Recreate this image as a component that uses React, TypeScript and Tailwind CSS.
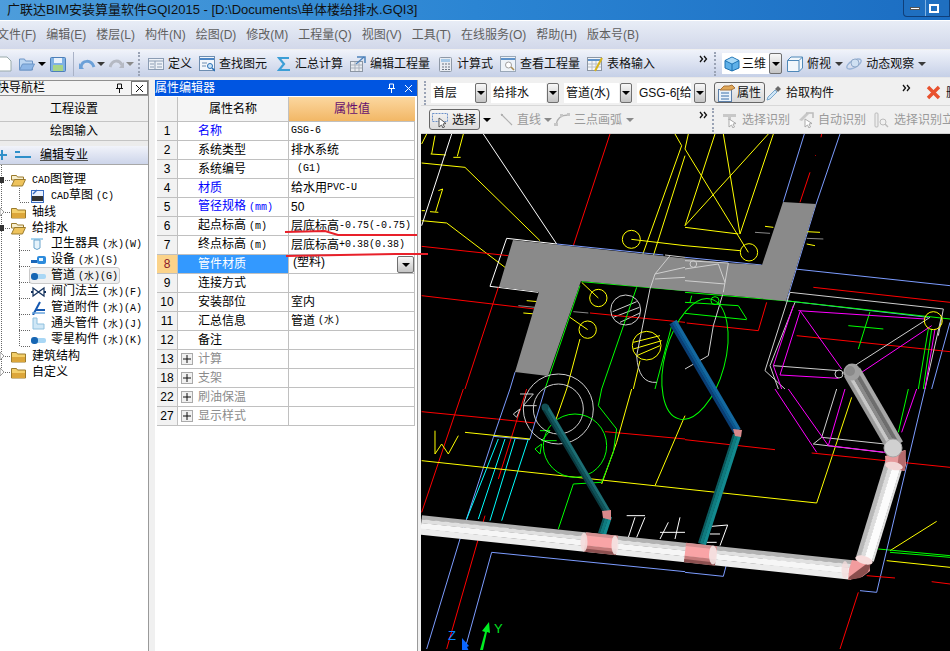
import React from "react";

const Arrow = ({ c = "border-t-black" }: { c?: string }) => (
  <div className={`w-0 h-0 border-x-[4px] border-t-[4px] border-x-transparent ${c}`} />
);
const GreyArrow = () => <Arrow c="border-t-[#8a8a8a]" />;
const DarkArrow = () => <Arrow c="border-t-[#3a3a3a]" />;

const DropBtn = ({ c = "w-[12px] h-[20px]" }: { c?: string }) => (
  <div className={`${c} flex items-center justify-center border border-[#6f6f6f] rounded-[2px] bg-gradient-to-b from-[#f8f8f8] to-[#c4c4c4] shrink-0`}>
    <Arrow />
  </div>
);

const M = ({ children }: { children: React.ReactNode }) => (
  <span className="font-['Liberation_Mono',monospace] text-[10px]">{children}</span>
);
const MS = ({ children }: { children: React.ReactNode }) => (
  <span className="ml-[3px] font-['Liberation_Mono',monospace] text-[10px]">{children}</span>
);

const Chevrons = () => (
  <svg width="9" height="8" viewBox="0 0 9 8" className="shrink-0">
    <path d="M1 1l2.5 3L1 7M5 1l2.5 3L5 7" fill="none" stroke="#111" strokeWidth="1.3" />
  </svg>
);

const Dots = () => (
  <div className="w-[3px] h-[24px] shrink-0 border-l-2 border-dotted border-[#9aa3b5]" />
);

const I = ({ children, w = 16, h = 16 }: { children: React.ReactNode; w?: number; h?: number }) => (
  <svg width={w} height={h} viewBox={`0 0 ${w} ${h}`} className="shrink-0">
    {children}
  </svg>
);

const FolderClosed = () => (
  <I w={15} h={14}>
    <path d="M0.5 3.5h5l1 1.5h8v8h-14z" fill="#f3cf6a" stroke="#9a7a2c" />
    <rect x="1" y="8" width="13" height="5" fill="#dca63a" />
  </I>
);
const FolderOpen = () => (
  <I w={15} h={14}>
    <path d="M0.5 2.5h5l1 1.5h6v3h-12z" fill="#f7efd0" stroke="#9a7a2c" />
    <path d="M0.5 13l3-6.5h11l-3 6.5z" fill="#eec35c" stroke="#9a7a2c" />
  </I>
);

const TreeIcon = ({ kind }: { kind: string }) => {
  if (kind === "cad")
    return (
      <I w={14} h={14}>
        <rect x="0.5" y="1.5" width="12" height="12" fill="#e8f0ff" stroke="#3a6cc0" />
        <path d="M2 5L6 1" stroke="#3a6cc0" strokeWidth="1.5" />
        <rect x="1" y="7" width="11" height="5" fill="#333" />
      </I>
    );
  if (kind === "basin")
    return (
      <I w={14} h={14}>
        <path d="M0 1h12v2H0z" fill="#a8d4ee" />
        <path d="M3 3h6v8q-3 3-6 0z" fill="#e6f3fb" stroke="#6aa4cc" />
      </I>
    );
  if (kind === "device")
    return (
      <I w={16} h={14}>
        <rect x="0" y="7" width="6" height="3" fill="#1a66b8" />
        <rect x="6" y="3" width="9" height="8" rx="2" fill="#2d8bdc" />
        <rect x="8" y="5" width="4" height="3" fill="#e6f5ff" />
      </I>
    );
  if (kind === "pipe")
    return (
      <I w={15} h={14}>
        <rect x="3" y="5" width="12" height="5" rx="2" fill="#a9d7f5" />
        <rect x="0" y="4" width="7" height="7" rx="3" fill="#1766b3" />
      </I>
    );
  if (kind === "valve")
    return (
      <I w={15} h={14}>
        <path d="M2 3l11 8V3L2 11z" fill="#fff" stroke="#12305c" strokeWidth="1.2" />
        <path d="M0 7h2M13 7h2" stroke="#12305c" strokeWidth="2" />
      </I>
    );
  if (kind === "acc")
    return (
      <I w={15} h={14}>
        <path d="M2 14L9 1" stroke="#1558b0" strokeWidth="2" />
        <path d="M4 9h10" stroke="#1558b0" strokeWidth="2" />
        <path d="M1 12h13" stroke="#6aa4dc" strokeWidth="1.5" />
      </I>
    );
  return (
    <I w={14} h={14}>
      <path d="M2 1h4v6h7v5H2z" fill="#cfe7f6" stroke="#8fc0de" />
    </I>
  );
};

const TreeRow = ({ ml, icon, children, sel }: { ml: string; icon: React.ReactNode; children: React.ReactNode; sel?: boolean }) => (
  <div className={`h-[16px] flex items-center relative ${ml}`}>
    {sel && <div className="absolute left-[-2px] top-[-1px] w-[91px] h-[17px] rounded-[3px] border border-[#c9c9c9] bg-[#f1f1f1]" />}
    <div className="relative w-[19px] shrink-0 flex items-center">{icon}</div>
    <div className="relative whitespace-nowrap text-[12px] leading-[16px] text-black">{children}</div>
  </div>
);

const Tree = () => (
  <div className="relative pt-[7px] flex flex-col">
    <svg className="absolute left-0 top-0" width="40" height="212" viewBox="0 0 40 212">
      <g stroke="#666" strokeDasharray="1 1" fill="none" shapeRendering="crispEdges">
        <path d="M19.5 23V37H30M19.5 70V181H30M1.5 0V210M5 15h6M5 47h6M5 63h6M5 191h6M5 207h6" />
        <path d="M19 85h12M19 101h12M19 117h12M19 133h12M19 149h12M19 165h12" />
      </g>
      <path d="M0 12l4 0 0 6-4 0z" fill="#333" />
      <path d="M0 60l4 0 0 6-4 0z" fill="#333" />
      <path d="M0 43l4 4-4 4z M0 187l4 4-4 4z M0 203l4 4-4 4z" fill="#fff" stroke="#999" />
    </svg>
    <TreeRow ml="ml-[11px]" icon={<FolderOpen />}>
      <span className="ml-[2px]"><M>CAD</M>图管理</span>
    </TreeRow>
    <TreeRow ml="ml-[31px]" icon={<TreeIcon kind="cad" />}>
      <span className="ml-[1px]"><M>CAD</M>草图<MS>(C)</MS></span>
    </TreeRow>
    <TreeRow ml="ml-[11px]" icon={<FolderClosed />}><span className="ml-[2px]">轴线</span></TreeRow>
    <TreeRow ml="ml-[11px]" icon={<FolderOpen />}><span className="ml-[2px]">给排水</span></TreeRow>
    <TreeRow ml="ml-[31px]" icon={<TreeIcon kind="basin" />}><span className="ml-[1px]">卫生器具<MS>(水)(W)</MS></span></TreeRow>
    <TreeRow ml="ml-[31px]" icon={<TreeIcon kind="device" />}><span className="ml-[1px]">设备<MS>(水)(S)</MS></span></TreeRow>
    <TreeRow ml="ml-[31px]" sel icon={<TreeIcon kind="pipe" />}><span className="ml-[1px]">管道<MS>(水)(G)</MS></span></TreeRow>
    <TreeRow ml="ml-[31px]" icon={<TreeIcon kind="valve" />}><span className="ml-[1px]">阀门法兰<MS>(水)(F)</MS></span></TreeRow>
    <TreeRow ml="ml-[31px]" icon={<TreeIcon kind="acc" />}><span className="ml-[1px]">管道附件<MS>(水)(A)</MS></span></TreeRow>
    <TreeRow ml="ml-[31px]" icon={<TreeIcon kind="elbow" />}><span className="ml-[1px]">通头管件<MS>(水)(J)</MS></span></TreeRow>
    <TreeRow ml="ml-[31px]" icon={<TreeIcon kind="pipe" />}><span className="ml-[1px]">零星构件<MS>(水)(K)</MS></span></TreeRow>
    <TreeRow ml="ml-[11px]" icon={<FolderClosed />}><span className="ml-[2px]">建筑结构</span></TreeRow>
    <TreeRow ml="ml-[11px]" icon={<FolderClosed />}><span className="ml-[2px]">自定义</span></TreeRow>
  </div>
);

const Pin = ({ c = "#111" }: { c?: string }) => (
  <svg width="9" height="10" viewBox="0 0 9 10">
    <path d="M2.5 1h4v4.5h-4zM1 5.5h7M4.5 5.5V10" fill="none" stroke={c} strokeWidth="1" />
  </svg>
);
const XMark = ({ c = "#111" }: { c?: string }) => (
  <svg width="9" height="9" viewBox="0 0 9 9">
    <path d="M1 1l7 7M8 1L1 8" stroke={c} strokeWidth="1" />
  </svg>
);

const LeftPanel = () => (
  <div className="w-[149px] shrink-0 flex flex-col border-r border-[#9a9a9a]">
    <div className="h-[16px] flex items-center bg-[#f4f4f4] border-y border-[#8f8f8f] text-[12px] leading-[14px] overflow-hidden">
      <span className="ml-[-3px] flex-1 whitespace-nowrap">快导航栏</span>
      <div className="mr-[7px]"><Pin /></div>
      <div className="w-[17px] h-[14px] border border-[#777] bg-white flex items-center justify-center"><XMark /></div>
    </div>
    <div className="h-[26px] bg-[#f0f0f0] border-b border-[#c4c4c4] flex items-center justify-center text-[12px]">工程设置</div>
    <div className="h-[19px] bg-[#f0f0f0] border-b border-[#c4c4c4] flex items-center justify-center text-[12px]">绘图输入</div>
    <div className="h-[5px] bg-[#ececec]" />
    <div className="h-[19px] flex items-center bg-gradient-to-b from-[#f1f3fa] to-[#cdd5ea] border-b border-[#a8a8a8]">
      <svg width="34" height="12" viewBox="0 0 34 12" className="shrink-0">
        <path d="M-3 6h10M2 1v10" stroke="#2f8fc9" strokeWidth="2" />
        <path d="M15 3h5M15 8h16" stroke="#2f8fc9" strokeWidth="2" />
      </svg>
      <span className="ml-[6px] text-[12px] underline decoration-[#555]">编辑专业</span>
    </div>
    <div className="flex-1 bg-white"><Tree /></div>
  </div>
);

type Row = { n: string; name: React.ReactNode; val?: React.ReactNode; kind?: "blue" | "grey" | "sel" };

const rows: Row[] = [
  { n: "1", name: "名称", val: <M>GSG-6</M>, kind: "blue" },
  { n: "2", name: "系统类型", val: "排水系统" },
  { n: "3", name: "系统编号", val: <M>&nbsp;(G1)</M> },
  { n: "4", name: "材质", val: <>给水用<M>PVC-U</M></>, kind: "blue" },
  { n: "5", name: <>管径规格<MS>(mm)</MS></>, val: "50", kind: "blue" },
  { n: "6", name: <>起点标高<MS>(m)</MS></>, val: <>层底标高<M>-0.75(-0.75)</M></> },
  { n: "7", name: <>终点标高<MS>(m)</MS></>, val: <>层底标高<M>+0.38(0.38)</M></> },
  { n: "8", name: "管件材质", val: "(塑料)", kind: "sel" },
  { n: "9", name: "连接方式" },
  { n: "10", name: "安装部位", val: "室内" },
  { n: "11", name: "汇总信息", val: <>管道<MS>(水)</MS></> },
  { n: "12", name: "备注" },
  { n: "13", name: "计算", kind: "grey" },
  { n: "18", name: "支架", kind: "grey" },
  { n: "22", name: "刷油保温", kind: "grey" },
  { n: "27", name: "显示样式", kind: "grey" },
];

const PropRow = ({ r }: { r: Row }) => {
  const sel = r.kind === "sel";
  const grey = r.kind === "grey";
  const blue = r.kind === "blue";
  return (
    <div className="h-[19px] flex border-b border-[#c0c0c0] text-[12px] leading-[18px]">
      <div className={`w-[21px] shrink-0 flex items-center justify-center border-r border-[#c0c0c0] ${sel ? "bg-[#fbd38a] text-[#8a1a2a]" : "bg-[#f2f2f2] text-black"}`}>{r.n}</div>
      <div className={`w-[111px] shrink-0 border-r border-[#c0c0c0] flex items-center ${sel ? "bg-[#3399ff] text-white" : blue ? "text-[#0000ff]" : grey ? "text-[#8c8c8c]" : "text-black"}`}>
        {grey ? (
          <div className="ml-[3px] mr-[5px] w-[12px] h-[12px] border border-[#aaa] bg-[#f1f1f1] flex items-center justify-center">
            <svg width="8" height="8" viewBox="0 0 8 8"><path d="M0 4h8M4 0v8" stroke="#111" strokeWidth="1" /></svg>
          </div>
        ) : (
          <div className="w-[20px] shrink-0" />
        )}
        <span className="whitespace-nowrap">{r.name}</span>
      </div>
      <div className="flex-1 min-w-0 flex items-center relative pl-[2px] whitespace-nowrap text-black overflow-hidden">
        {sel ? <span className="ml-[2px] -mt-[4px]">{r.val}</span> : r.val}
        {sel && <div className="absolute right-0 top-[1px]"><DropBtn c="w-[17px] h-[17px]" /></div>}
      </div>
    </div>
  );
};

const PropPanel = () => (
  <div className="w-[263px] shrink-0 flex flex-col bg-white border-r border-[#9a9a9a]">
    <div className="h-[16px] bg-[#0055e1] text-white flex items-center text-[12px] leading-[14px]">
      <span className="flex-1">属性编辑器</span>
      <div className="mr-[8px]"><Pin c="#fff" /></div>
      <div className="mr-[4px]"><XMark c="#fff" /></div>
    </div>
    <div className="mt-[1px] ml-[2px] w-[258px] flex flex-col">
      <div className="h-[25px] flex border-b border-[#c0c0c0] text-[12px]">
        <div className="w-[21px] bg-[#f2f2f2] border-r border-[#c0c0c0]" />
        <div className="w-[111px] bg-[#f5f5f5] border-r border-[#c0c0c0] flex items-center justify-center">属性名称</div>
        <div className="flex-1 bg-gradient-to-b from-[#fbd79f] to-[#f2b765] text-[#66106f] flex items-center justify-center">属性值</div>
      </div>
      <div className="border-r border-[#c0c0c0]">
        {rows.map((r) => (
          <PropRow key={r.n} r={r} />
        ))}
      </div>
    </div>
  </div>
);

/* ---------------- toolbar ---------------- */
const Doc = () => (
  <I><path d="M-2 1h9l4 4v10H-2z" fill="#fff" stroke="#9aa" /></I>
);
const Folder2 = () => (
  <I>
    <path d="M0.5 3h5l1 2h7v9h-13z" fill="#bcd6f2" stroke="#6d95c6" />
    <path d="M0.5 14l3-6h12l-3 6z" fill="#8db6e6" stroke="#6d95c6" />
  </I>
);
const Save = () => (
  <I>
    <rect x="0.5" y="1.5" width="15" height="14" rx="1" fill="#7fb1e4" stroke="#4d7fb8" />
    <rect x="4" y="2" width="8" height="5" fill="#e8f1fb" />
    <rect x="3" y="9" width="10" height="6" fill="#a7d488" />
  </I>
);
const Undo = ({ c = "#6ba0d8" }: { c?: string }) => (
  <I w={17} h={16}>
    <path d="M2 11C3 4 12 3 15 11" fill="none" stroke={c} strokeWidth="3" />
    <path d="M0 7l5 6H0z" fill={c} />
  </I>
);
const Redo = () => (
  <I w={15} h={16}>
    <path d="M1 11C3 4 10 3 13 9" fill="none" stroke="#b5b9c3" strokeWidth="3" />
    <path d="M15 6v6H10z" fill="#b5b9c3" />
  </I>
);
const DefIcon = () => (
  <I>
    <rect x="0.5" y="2.5" width="15" height="11" fill="#eef2f8" stroke="#8b9cb3" />
    <path d="M1 5h14M7 5v8M9 8h5M9 11h5M2 8h4M2 11h4" stroke="#8b9cb3" />
  </I>
);
const FindIcon = () => (
  <I>
    <rect x="0.5" y="0.5" width="15" height="14" fill="#f2f6fb" stroke="#6d8db0" />
    <path d="M1 3h14" stroke="#4d86c4" strokeWidth="2" />
    <path d="M3 7h5M3 10h4" stroke="#6d8db0" />
    <circle cx="11" cy="10" r="2.5" fill="#cde6f8" stroke="#2a6fb5" />
    <path d="M13 12l3 3" stroke="#2a6fb5" strokeWidth="1.6" />
  </I>
);
const SigmaIcon = () => (
  <I w={14} h={16}>
    <path d="M12 2H2l5 6-5 6h11" fill="none" stroke="#3b9ed6" strokeWidth="2.2" />
  </I>
);
const EditQty = () => (
  <I>
    <rect x="0.5" y="5.5" width="12" height="10" fill="#e8ebf0" stroke="#8c96a3" />
    <path d="M1 9h11M1 12h11M5 6v9M9 6v9" stroke="#a9b1bc" />
    <path d="M7 1h8v6" fill="none" stroke="#4e82ba" strokeWidth="1.5" />
    <path d="M6 8l8-7" stroke="#4e82ba" strokeWidth="1.2" />
  </I>
);
const Calc = () => (
  <I w={14} h={16}>
    <rect x="0.5" y="1.5" width="12" height="14" rx="1" fill="#e8ecf2" stroke="#8e98a6" />
    <rect x="2" y="3" width="9" height="3" fill="#a5c9e8" />
    <path d="M3 8h2M6 8h2M9 8h2M3 11h2M6 11h2M9 11h2M3 13.5h2M6 13.5h2M9 13.5h2" stroke="#6a7482" />
  </I>
);
const ViewQty = () => (
  <I>
    <rect x="0.5" y="0.5" width="15" height="15" fill="#eef3f8" stroke="#9aa8b8" />
    <path d="M1 3h14" stroke="#5f92c9" strokeWidth="2" />
    <circle cx="8.5" cy="9" r="3" fill="#fff" stroke="#9f9f9f" />
    <path d="M11 11l3 3" stroke="#a88b50" strokeWidth="1.6" />
  </I>
);
const TableInput = () => (
  <I>
    <rect x="0.5" y="1.5" width="14" height="13" fill="#f4f6f9" stroke="#8c96a3" />
    <path d="M1 4h13" stroke="#5f92c9" strokeWidth="2" />
    <path d="M1 8h13M1 11h13M5 5v9M9 5v9" stroke="#b8bec8" />
    <path d="M8 15L15 2" stroke="#d8b41c" strokeWidth="2" />
  </I>
);
const Cube = () => (
  <I>
    <path d="M8 1l7 3.5v7.5L8 15l-7-3V4.5z" fill="#5eb0e8" stroke="#1a6fb0" />
    <path d="M1 4.5L8 8l7-3.5M8 8v7" fill="none" stroke="#1a6fb0" />
    <path d="M8 1.5l6 3-6 3-6-3z" fill="#a8d8f6" />
  </I>
);
const TopBox = () => (
  <I>
    <path d="M0.5 4.5L4 1h11.5v11L12 15.5H0.5z" fill="#f2f7fb" stroke="#4f88b8" />
    <path d="M0.5 4.5H12v11M12 4.5L15.5 1" fill="none" stroke="#4f88b8" />
  </I>
);
const Orbit = () => (
  <I>
    <ellipse cx="8" cy="8" rx="8" ry="3.5" transform="rotate(-30 8 8)" fill="none" stroke="#9ab4d6" strokeWidth="1.4" />
    <circle cx="9" cy="7" r="4" fill="#cfe0f2" stroke="#8fa8c8" />
  </I>
);
const PropIcon = () => (
  <I w={18} h={18}>
    <rect x="1.5" y="5.5" width="13" height="12" fill="#eaf3fb" stroke="#5c7fa8" />
    <path d="M4 9h8M4 12h8M4 15h8" stroke="#3a6ea8" />
    <path d="M3 6l4-4h5l3-1 3 3-4 2H4z" fill="#e0a85a" stroke="#a8743a" />
  </I>
);
const Dropper = () => (
  <I w={16} h={16}>
    <path d="M1 15l3-1 7-7-2-2-7 7z" fill="#cfe6f7" stroke="#7ba8cc" />
    <path d="M9 4l3 3 3-3-3-3z" fill="#6a6a6a" />
  </I>
);
const RedX = () => (
  <I w={15} h={15}>
    <path d="M2 2l11 11M13 2L2 13" stroke="#e8512e" strokeWidth="3.4" />
  </I>
);
const LineIcon = () => (
  <I w={13} h={13}>
    <path d="M1 1l11 11" stroke="#b0b0b0" strokeWidth="1.2" />
    <path d="M1 1h2v2H1z" fill="#b0b0b0" />
  </I>
);
const ArcIcon = () => (
  <I w={16} h={14}>
    <path d="M2 12C3 5 7 2 14 2" fill="none" stroke="#b0b0b0" strokeWidth="1.4" />
    <path d="M0 10h4v3H0zM6 1h3v3H6zM13 0h3v3h-3z" fill="#c6c6c6" />
  </I>
);
const SelectCursor = ({ grey }: { grey?: boolean }) => (
  <I w={16} h={16}>
    <rect x="0.5" y="1.5" width="15" height="8" fill="none" stroke={grey ? "#bbb" : "#6b90c8"} strokeDasharray="2 1" />
    <path d="M7 6l0 9 2.5-2 1.5 3 1.5-1-1.5-3 3-.5z" fill="#fff" stroke={grey ? "#aaa" : "#555"} />
  </I>
);
const GreyTool = () => (
  <I w={16} h={16}>
    <path d="M1 2h13v3H9v3H6V5H1z" fill="#c8c8c8" />
    <path d="M7 7l0 8 2.5-2 1.5 3 1.5-1-1.5-3 3-.5z" fill="#fff" stroke="#aaa" />
  </I>
);
const AutoTool = () => (
  <I w={16} h={16}>
    <path d="M1 8l7-7 3 1-7 7z" fill="#c8c8c8" />
    <path d="M8 1h7v5" fill="none" stroke="#bbb" strokeWidth="1.5" />
    <path d="M7 7l0 8 2.5-2 1.5 3 1.5-1-1.5-3 3-.5z" fill="#fff" stroke="#aaa" />
  </I>
);
const VertTool = () => (
  <I w={16} h={16}>
    <rect x="1" y="1" width="3" height="14" rx="1" fill="#ececec" stroke="#bbb" />
    <circle cx="9" cy="10" r="3" fill="none" stroke="#bbb" />
    <path d="M11 12l3 3" stroke="#bbb" strokeWidth="1.4" />
  </I>
);

const T = ({ icon, label, c }: { icon: React.ReactNode; label: string; c: string }) => (
  <div className={`flex items-center gap-[4px] shrink-0 whitespace-nowrap ${c}`}>
    {icon}
    <span>{label}</span>
  </div>
);

const Field = ({ text, c }: { text: string; c: string }) => (
  <div className={`h-[20px] bg-white flex items-center pl-[2px] shrink-0 overflow-hidden whitespace-nowrap ${c}`}>{text}</div>
);

const TopBars = () => (
  <>
    <div className="h-[20px] flex items-center justify-between bg-[linear-gradient(90deg,#4d9ddb,#2b85d3_50%,#1b6dc2)] shrink-0">
      <span className="ml-[7px] text-[13px] leading-[18px] text-[#111] whitespace-nowrap">广联达BIM安装算量软件GQI2015 - [D:\Documents\单体楼给排水.GQI3]</span>
      <div className="flex h-[17px] self-start w-[47px] border border-t-0 border-[#0f3f7a] rounded-bl-[4px] bg-[#1f6fc0]">
        <div className="w-[22px] border-r border-[#7fb2e2] flex items-center justify-center">
          <div className="w-[10px] h-[3px] bg-white border border-[#555]" />
        </div>
        <div className="flex-1 flex items-center pl-[3px]">
          <div className="w-[10px] h-[9px] bg-transparent border-2 border-white" />
        </div>
      </div>
    </div>
    <div className="h-[1px] bg-white shrink-0" />
    <div className="h-[28px] flex items-center gap-[10px] pr-[2px] bg-gradient-to-b from-[#e8edf6] to-[#d2d8ea] text-[12px] text-[#5f5f5f] whitespace-nowrap shrink-0 overflow-hidden">
      <span className="-ml-[3px]">文件(F)</span><span>编辑(E)</span><span>楼层(L)</span><span>构件(N)</span><span>绘图(D)</span><span>修改(M)</span><span>工程量(Q)</span><span>视图(V)</span><span>工具(T)</span><span>在线服务(O)</span><span>帮助(H)</span><span>版本号(B)</span>
    </div>
    <div className="h-[28px] mt-[1px] flex items-center bg-gradient-to-b from-[#f0f3fa] to-[#c6d0e7] border-b border-[#e8e8e8] text-[12px] text-[#111] shrink-0 overflow-hidden">
      <div className="w-[18px] overflow-hidden shrink-0"><Doc /></div>
      <div className="ml-[1px]"><Folder2 /></div>
      <div className="ml-[3px]"><Arrow /></div>
      <div className="ml-[4px]"><Save /></div>
      <div className="ml-[7px] w-[1px] h-[24px] bg-[#a9b2c6]" />
      <div className="ml-[5px]"><Undo /></div>
      <div className="ml-[1px]"><DarkArrow /></div>
      <div className="ml-[4px]"><Redo /></div>
      <div className="ml-[2px]"><GreyArrow /></div>
      <div className="ml-[4px]"><Dots /></div>
      <T c="ml-[7px]" icon={<DefIcon />} label="定义" />
      <T c="ml-[7px]" icon={<FindIcon />} label="查找图元" />
      <T c="ml-[10px]" icon={<SigmaIcon />} label="汇总计算" />
      <T c="ml-[7px]" icon={<EditQty />} label="编辑工程量" />
      <T c="ml-[9px]" icon={<Calc />} label="计算式" />
      <T c="ml-[7px]" icon={<ViewQty />} label="查看工程量" />
      <T c="ml-[7px]" icon={<TableInput />} label="表格输入" />
      <div className="ml-[44px] -mt-[10px]"><Chevrons /></div>
      <div className="ml-[6px]"><Dots /></div>
      <div className="ml-[5px] h-[21px] w-[47px] bg-white flex items-center gap-[2px] pl-[2px] whitespace-nowrap shrink-0"><Cube /><span>三维</span></div>
      <DropBtn c="w-[13px] h-[21px]" />
      <T c="ml-[5px]" icon={<TopBox />} label="俯视" />
      <div className="ml-[4px]"><DarkArrow /></div>
      <T c="ml-[3px]" icon={<Orbit />} label="动态观察" />
      <div className="ml-[4px]"><DarkArrow /></div>
    </div>
  </>
);

const RightPanel = () => (
  <div className="flex-1 min-w-0 flex flex-col">
    <div className="h-[26px] flex items-center bg-[#f0f0f0] border-b border-[#d8d8d8] text-[12px] text-[#111] shrink-0 overflow-hidden whitespace-nowrap">
      <div className="ml-[3px]"><Dots /></div>
      <Field c="ml-[4px] w-[44px] pl-[1px]" text="首层" />
      <DropBtn />
      <Field c="ml-[4px] w-[55px]" text="给排水" />
      <div className="ml-[1px]"><DropBtn /></div>
      <Field c="ml-[5px] w-[55px]" text="管道(水)" />
      <div className="ml-[1px]"><DropBtn /></div>
      <Field c="ml-[5px] w-[54px]" text="GSG-6[给" />
      <div className="ml-[3px]"><DropBtn /></div>
      <div className="ml-[4px] w-[1px] h-[20px] bg-[#999]" />
      <div className="ml-[4px] w-[51px] h-[21px] flex items-center gap-[2px] pl-[2px] border border-[#666] rounded-[3px] bg-gradient-to-b from-[#f5f5f5] to-[#d8d8d8] shrink-0"><PropIcon /><span>属性</span></div>
      <T c="ml-[1px]" icon={<Dropper />} label="拾取构件" />
      <div className="ml-[68px] -mt-[10px]"><Chevrons /></div>
      <div className="ml-[3px] w-[1px] h-[24px] bg-[#ccc]" />
      <div className="ml-[12px]"><RedX /></div>
      <span className="ml-[5px]">删除</span>
    </div>
    <div className="h-[28px] flex items-center bg-[#f0f0f0] border-b border-[#cfcfcf] text-[12px] text-[#9a9a9a] shrink-0 overflow-hidden whitespace-nowrap">
      <div className="ml-[8px] w-[51px] h-[21px] flex items-center gap-[4px] pl-[2px] border border-[#666] rounded-[3px] bg-gradient-to-b from-[#f5f5f5] to-[#dcdcdc] text-[#111] shrink-0"><SelectCursor /><span>选择</span></div>
      <div className="ml-[3px]"><Arrow /></div>
      <div className="ml-[2px] w-[1px] h-[20px] bg-[#999]" />
      <T c="ml-[7px]" icon={<LineIcon />} label="直线" />
      <div className="ml-[3px]"><GreyArrow /></div>
      <T c="ml-[2px]" icon={<ArcIcon />} label="三点画弧" />
      <div className="ml-[4px]"><GreyArrow /></div>
      <div className="ml-[65px] -mt-[10px]"><Chevrons /></div>
      <div className="ml-[4px]"><Dots /></div>
      <T c="ml-[7px]" icon={<GreyTool />} label="选择识别" />
      <T c="ml-[8px]" icon={<AutoTool />} label="自动识别" />
      <T c="ml-[8px]" icon={<VertTool />} label="选择识别立" />
    </div>
    <CadCanvas />
  </div>
);

/* ---------------- CAD canvas ---------------- */
const C = { y: "#ffff00", r: "#ff0000", g: "#00ff00", b: "#7c9cff", w: "#ffffff", s: "#cfcfcf", c: "#00ffff", m: "#ff00ff", k: "#8a8a8a" };
type L = [keyof typeof C, string];

const z5: L[] = [
  ["y", "35,75 45,20"], ["y", "32,75 78,78"], ["y", "130,15 112,82"], ["y", "100,85 122,85"], ["y", "5,45 20,15"],
  ["y", "68,180 47,248"], ["y", "30,248 55,250"], ["y", "55,185 68,180"], ["y", "5,245 15,245"],
  ["y", "5,102 135,115 360,335"], ["y", "5,275 80,282 255,415"], ["y", "634,331 795,350"],
  ["y", "765,15 785,50 665,385"], ["y", "795,80 700,380"], ["y", "485,460 535,507"], ["y", "450,565 503,602"],
  ["y", "320,515 355,518"], ["y", "310,552 345,555"], ["y", "480,630 440,780"], ["y", "660,695 640,780"],
  ["y", "640,640 720,620"], ["y", "640,660 725,635"], ["y", "650,680 720,650"],
  ["s", "578,548 650,518"], ["s", "580,565 658,535"], ["s", "600,580 660,552"],
  ["w", "95,15 5,290"], ["w", "190,15 410,345"], ["w", "260,328 210,472 355,490"], ["w", "260,328 410,345"],
  ["r", "570,15 460,350"], ["r", "235,475 135,780"], ["r", "5,352 265,380"], ["r", "5,500 345,540"], ["r", "510,552 795,580"],
  ["k", "295,530 345,535"], ["k", "460,548 505,552"],
  ["g", "485,458 795,485"], ["g", "480,470 375,780"], ["g", "650,475 545,780"], ["g", "755,590 705,780"],
  ["b", "410,345 730,378"], ["b", "470,490 285,730 270,780"],
  ["s", "690,480 650,680"],
];
const z6: L[] = [
  ["b", "358,15 295,218"], ["b", "465,15 393,226"], ["b", "393,226 305,515"], ["b", "330,420 795,470"], ["b", "0,385 230,408"],
  ["b", "300,515 730,565"], ["b", "795,580 740,780"],
  ["r", "410,15 408,25"], ["r", "390,78 392,80"], ["r", "375,130 345,220"], ["r", "385,475 795,520"], ["r", "245,520 220,605 5,582"], ["r", "335,620 795,668"],
  ["y", "10,15 0,60"], ["y", "90,15 0,290"], ["y", "115,15 165,315"], ["y", "265,15 165,315"], ["y", "250,15 0,290"], ["y", "0,60 190,370"], ["y", "0,295 160,315"], ["y", "0,350 165,365"],
  ["y", "240,292 265,295"], ["y", "365,308 405,310"], ["y", "365,345 390,350"],
  ["k", "210,310 255,313"], ["k", "365,328 415,330"],
  ["g", "0,490 300,515 795,570"], ["g", "0,520 160,530 185,570"], ["g", "0,553 185,572"], ["g", "490,590 595,600"], ["g", "555,548 520,660"], ["g", "730,600 700,780"], ["g", "740,600 715,780"], ["g", "20,500 15,520"],
  ["s", "315,490 775,540 760,620"], ["s", "315,490 240,725 300,780"], ["s", "330,520 255,710 280,780"], ["s", "115,490 85,590 70,680 0,720"], ["s", "770,560 720,780"], ["s", "735,565 470,735"], ["s", "265,710 460,725"],
  ["m", "325,530 265,710 290,780"], ["m", "345,548 285,738 460,748"], ["m", "345,545 470,720"], ["m", "340,545 720,570"], ["m", "740,590 530,730"], ["m", "750,600 720,780"],
];
const z7: L[] = [
  ["r", "130,0 5,370"], ["r", "5,68 230,90"], ["r", "320,0 235,270"], ["r", "555,128 795,150"], ["r", "195,380 80,780"], ["r", "230,90 345,102"],
  ["b", "270,0 220,145 120,450 20,780"], ["b", "375,0 330,150"], ["b", "220,142 330,152"], ["b", "215,490 795,548"], ["b", "215,490 135,780"],
  ["c", "235,150 140,390"], ["c", "255,150 175,390"], ["c", "285,150 210,395"], ["c", "325,150 245,395"],
  ["y", "5,215 795,300"], ["y", "135,130 330,150"], ["y", "45,125 45,195 65,165 85,195 115,140"], ["y", "440,0 405,100"], ["y", "635,0 590,160 545,285"], ["y", "795,80 705,290"],
  ["g", "545,0 535,50 590,120 580,190 545,280 460,285 415,420"],
  ["s", "300,15 340,15 310,50 350,50"], ["s", "280,75 300,60 290,85 280,75"],
  ["g", "360,125 390,125 365,155 410,155"], ["g", "345,180 365,165 360,195 345,180"],
  ["w", "620,380 675,380"], ["w", "645,385 625,445"], ["w", "675,385 650,445"], ["w", "745,400 720,450"], ["w", "720,430 795,430"], ["w", "780,385 765,450"],
];
const z8: L[] = [
  ["y", "0,300 395,342 500,25"], ["y", "615,485 755,397"], ["y", "605,515 795,535"],
  ["g", "580,480 795,500"], ["g", "615,490 795,505"], ["g", "670,0 640,130"],
  ["b", "720,0 575,610 525,605"], ["b", "0,550 115,562 130,505"],
  ["w", "128,408 105,470"], ["w", "80,412 128,408"], ["w", "75,435 105,435"], ["w", "65,460 95,460"],
  ["r", "0,152 270,182"], ["r", "380,192 795,235"], ["r", "545,560 630,567"], ["r", "740,578 795,585"], ["r", "520,610 465,780"],
  ["s", "455,0 410,145 385,165 595,190"], ["s", "410,145 600,165"],
  ["m", "270,0 395,190"], ["m", "310,0 430,170 480,0"], ["m", "430,170 600,190"], ["m", "695,0 650,130"],
];
const plate5: L[] = [
  ["s", "735,378 795,385"], ["s", "750,380 705,435 690,480"], ["s", "705,435 795,415"], ["s", "795,445 705,450"],
];
const plate6: L[] = [
  ["s", "130,402 115,490"], ["s", "0,455 120,465"], ["s", "0,420 100,405 120,460"], ["s", "0,395 130,402"],
];

const Lines = ({ o, d, extra }: { o: [number, number]; d: L[]; extra?: React.ReactNode }) => (
  <g transform={`translate(${o[0]} ${o[1]}) scale(0.33333)`} fill="none" strokeWidth="1">
    {d.map(([c, p], i) => (
      <polyline key={i} points={p} stroke={C[c]} vectorEffect="non-scaling-stroke" />
    ))}
    {extra}
  </g>
);

const Circ = ({ x, y, r, c }: { x: number; y: number; r: number; c: keyof typeof C }) => (
  <circle cx={x} cy={y} r={r} stroke={C[c]} vectorEffect="non-scaling-stroke" fill="none" />
);

type Band = [number, number, string];
const Pipe = ({ a, b, w, bands }: { a: [number, number]; b: [number, number]; w: number; bands: Band[] }) => {
  const dx = b[0] - a[0];
  const dy = b[1] - a[1];
  const len = Math.hypot(dx, dy);
  const nx = -dy / len;
  const ny = dx / len;
  return (
    <g>
      {bands.map(([o, t, col], i) => {
        const off = (o - 0.5) * w;
        return (
          <line
            key={i}
            x1={a[0] + nx * off}
            y1={a[1] + ny * off}
            x2={b[0] + nx * off}
            y2={b[1] + ny * off}
            stroke={col}
            strokeWidth={t * w + 0.4}
          />
        );
      })}
    </g>
  );
};

const white: Band[] = [[0.1, 0.2, "#b2b2b2"], [0.3, 0.2, "#e0e0e0"], [0.55, 0.3, "#f6f6f6"], [0.85, 0.3, "#ececec"]];
const pink: Band[] = [[0.08, 0.16, "#d48f90"], [0.42, 0.52, "#f9a4a6"], [0.78, 0.2, "#c47a7a"], [0.93, 0.14, "#8c5050"]];
const greyB: Band[] = [[0.1, 0.2, "#9a9a9a"], [0.3, 0.2, "#c8c8c8"], [0.5, 0.2, "#8a8a8a"], [0.7, 0.2, "#6e6e6e"], [0.9, 0.2, "#a8a8a8"]];
const whiteV: Band[] = [[0.12, 0.24, "#b8b8b8"], [0.35, 0.22, "#dcdcdc"], [0.68, 0.44, "#fcfcfc"], [0.95, 0.1, "#e0e0e0"]];
const blueB: Band[] = [[0.2, 0.4, "#14689f"], [0.55, 0.3, "#0b568f"], [0.85, 0.3, "#0a3e74"]];
const tealB: Band[] = [[0.2, 0.4, "#138a8f"], [0.6, 0.4, "#0f7a7e"], [0.9, 0.2, "#0b5a5e"]];
const tealD: Band[] = [[0.2, 0.4, "#1d6e74"], [0.6, 0.4, "#0f5258"], [0.9, 0.2, "#0a3a40"]];

const CadCanvas = () => (
  <div className="flex-1 min-h-0 bg-black overflow-hidden">
    <svg width="529" height="516" viewBox="421 135 529 516" className="block">
      <Lines o={[420, 130]} d={z5} extra={
        <>
          <Circ x={634} y={331} r={27} c="y" />
          <Circ x={535} y={507} r={26} c="y" />
          <Circ x={503} y={602} r={26} c="y" />
          <Circ x={680} y={650} r={43} c="y" />
          <Circ x={617} y={543} r={45} c="s" />
          <path d="M650 680Q655 765 710 760" stroke="#cfcfcf" vectorEffect="non-scaling-stroke" />
        </>
      } />
      <Lines o={[685, 130]} d={z6} extra={
        <>
          <Circ x={192} y={370} r={26} c="y" />
          <Circ x={745} y={575} r={27} c="y" />
          <Circ x={90} y={515} r={12} c="g" />
          <Circ x={462} y={735} r={12} c="s" />
        </>
      } />
      <Lines o={[420, 390]} d={z7} extra={
        <>
          <Circ x={415} y={60} r={105} c="s" />
          <Circ x={415} y={60} r={75} c="s" />
          <Circ x={465} y={170} r={95} c="g" />
        </>
      } />
      <Lines o={[685, 390]} d={z8} />
      <ellipse cx="695" cy="360" rx="30" ry="62" transform="rotate(15 695 360)" fill="none" stroke="#00ff00" strokeWidth="1" />
      <polygon points="513,241 728,264 762,266 783,203 816,205 786,302 581,282 548,377 515,373 539,293 499,288" fill="#8a8a8a" />
      <Lines o={[420, 130]} d={plate5} />
      <Lines o={[685, 130]} d={plate6} extra={<Circ x={25} y={405} r={10} c="s" />} />

      {/* pipes */}
      <Pipe a={[673, 323]} b={[737, 432]} w={8} bands={blueB} />
      <Pipe a={[737, 436]} b={[702, 545]} w={8} bands={tealB} />
      <Pipe a={[545, 408]} b={[607, 513]} w={7} bands={tealD} />
      <Pipe a={[608, 517]} b={[602, 535]} w={8} bands={tealB} />
      <circle cx="545" cy="408" r="3.5" fill="#124e54" />
      <polygon points="602,512 611,511 611,521 603,519" fill="#d98a8c" />
      <polygon points="733,430 742,431 741,438 735,437" fill="#d98a8c" />

      <Pipe a={[421, 526]} b={[852, 571]} w={19} bands={white} />
      <Pipe a={[585, 543]} b={[617, 546.5]} w={19} bands={pink} />
      <Pipe a={[685, 553.5]} b={[716, 557]} w={19} bands={pink} />
      <ellipse cx="584" cy="543" rx="3.5" ry="9.5" fill="#f4dcdc" opacity="0.9" />
      <ellipse cx="615" cy="546" rx="3.5" ry="9.5" fill="#f4e4e4" opacity="0.9" />
      <ellipse cx="713" cy="556" rx="4" ry="9.5" fill="#f4e4e4" opacity="0.9" />
      <ellipse cx="845" cy="571" rx="3.5" ry="9" fill="#f4dcdc" opacity="0.8" />

      <Pipe a={[865, 560]} b={[895, 462]} w={18} bands={whiteV} />
      <Pipe a={[895, 447]} b={[852, 373]} w={18} bands={greyB} />
      <circle cx="852" cy="373" r="8.5" fill="#a0a0a0" />
      <circle cx="850" cy="372" r="5" fill="#8a8a8a" />
      <polygon points="852,561 869,563 870,572 862,578 848,581 849,570" fill="#f29c9e" />
      <polygon points="865,566 872,561 868,573 860,579 848,581 849,578" fill="#8a4e4e" />
      <ellipse cx="864" cy="561" rx="9" ry="4" transform="rotate(17 864 561)" fill="#f7dcdc" />
      <polygon points="885,457 905,451 906,466 904,472 886,468" fill="#e69a9c" />
      <polygon points="899,454 906,451 905,472 897,470" fill="#b46a6c" />
      <ellipse cx="894" cy="467" rx="9" ry="4" transform="rotate(12 894 467)" fill="#f2d6d6" />
      <circle cx="893" cy="449" r="9" fill="#d0d0d0" stroke="#a8a8a8" />

      {/* axis */}
      <path d="M480 651l5-18-3-1 7-9 1 11-3-1-4 18z" fill="#00ee22" />
      <path d="M462 651l0-12 7 8-2 1 2 4z" fill="#0a66ff" />
      <text x="448" y="641" fontSize="13" fill="#0a84ff" fontFamily="Liberation Sans, sans-serif">Z</text>
      <text x="494" y="634" fontSize="13" fill="#00e020" fontFamily="Liberation Sans, sans-serif">Y</text>
    </svg>
  </div>
);

export default function App() {
  return (
    <div className="relative w-[950px] h-[651px] overflow-hidden flex flex-col bg-[#f0f0f0] font-['Liberation_Sans','Noto_Sans_CJK_SC',sans-serif] text-black">
      <TopBars />
      <div className="h-[2px] shrink-0" />
      <div className="flex-1 min-h-0 flex">
        <LeftPanel />
        <div className="w-[6px] shrink-0" />
        <PropPanel />
        <div className="w-[3px] shrink-0" />
        <RightPanel />
      </div>
      <svg className="absolute left-0 top-0 pointer-events-none" width="950" height="651" viewBox="0 0 950 651">
        <polyline points="285,232 325,231 338,235 417,235" fill="none" stroke="#e8202a" strokeWidth="2" />
        <polyline points="286,256 395,254 428,254" fill="none" stroke="#e8202a" strokeWidth="2" />
      </svg>
    </div>
  );
}
